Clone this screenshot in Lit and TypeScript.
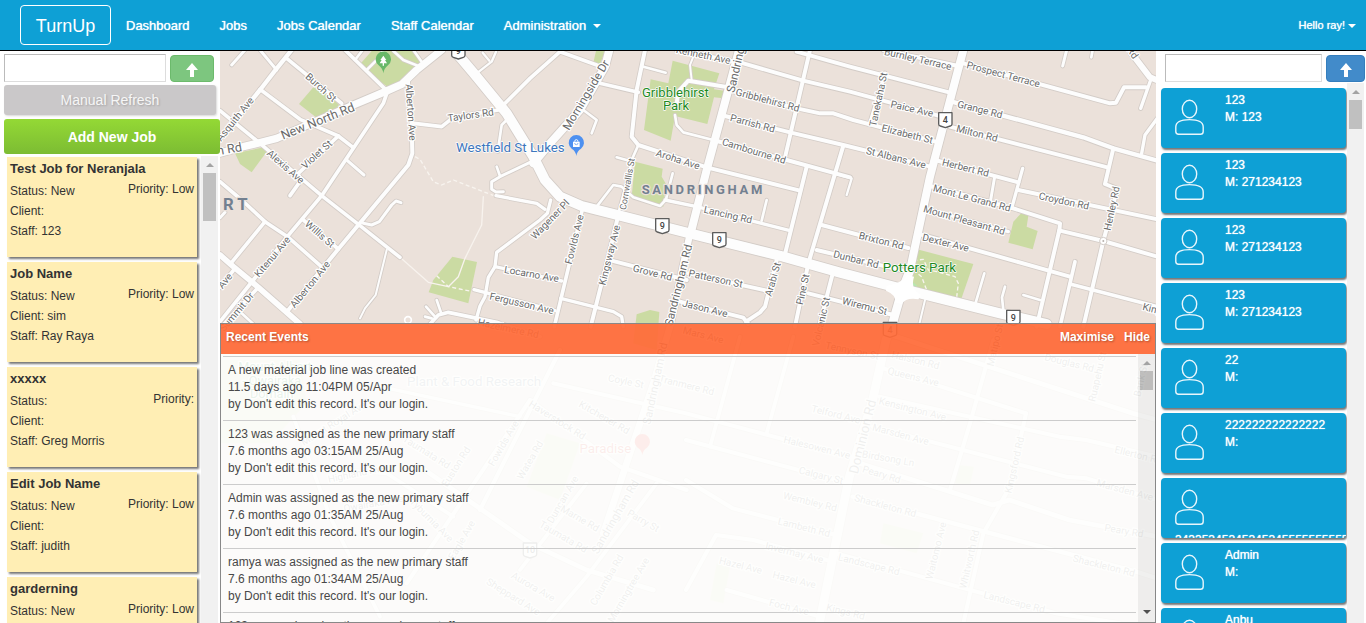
import { LitElement, html, svg, css } from "lit";
import { customElement } from "lit/decorators.js";

type Road = [number, string];
type Label = [string, number, number, number, number?, string?];

/* Map units are thirds of a pixel. */
const PARKS: string[] = [
  "418,45 455,3 590,3 600,45 560,95 505,112 495,105",
  "237,162 280,112 330,135 357,165 345,180 288,202",
  "45,310 140,290 140,305 95,367 60,342",
  "697,620 771,636 745,760 626,727 640,690",
  "1128,3 1155,3 1140,42 1120,38",
  "1358,32 1498,70 1482,118 1512,122 1510,145 1482,142 1462,222 1365,198 1352,272 1272,240 1292,88 1345,100",
  "1245,335 1328,356 1325,380 1338,402 1330,470 1235,440",
  "1250,793 1290,780 1318,786 1310,900 1240,880",
  "2405,488 2425,497 2420,530 2453,543 2438,598 2365,578 2380,515",
  "2080,595 2260,642 2222,752 2062,702",
];
const FAINT_PARKS: string[] = [
  "0,930 240,930 260,1060 150,1180 0,1180",
  "980,1150 1080,1180 1020,1350 920,1310",
  "2215,1245 2262,1250 2250,1305 2205,1300",
  "1990,1420 2110,1450 2090,1510 1980,1480",
  "1490,1540 1530,1550 1510,1660 1470,1650",
];

const ROADS: Road[] = [
  [9, "35,45 75,0"], [9, "120,0 170,60"], [13, "215,0 165,62 120,120 0,265"],
  [11, "200,25 365,160"], [11, "120,118 240,208 355,258 400,293"],
  [11, "0,182 120,280 305,437 420,527 540,622"],
  [11, "375,0 500,122"], [8, "405,30 428,0"], [8, "440,60 475,25 490,0"], [8, "520,3 550,30 595,48"], [8, "580,0 605,35"],
  [11, "502,125 490,160 400,295 305,437 200,562 100,690 0,815"],
  [11, "355,258 235,370 240,395 210,437"], [9, "380,330 432,375"],
  [12, "563,85 575,220 577,310 565,345 415,525 355,597 205,780"],
  [9, "430,520 455,525 478,515 515,465 528,453 543,458"],
  [11, "250,510 355,597"], [11, "0,395 65,450 135,515 205,562 310,655"],
  [11, "135,515 35,637"], [9, "0,503 15,487"],
  [17, "0,615 40,650 115,712 240,822"],
  [11, "45,655 0,712"], [11, "115,712 0,835"], [8, "65,790 100,822"],
  [6, "500,600 467,735 435,775 420,805"],
  [11, "583,220 665,230 700,202 835,180 850,165 930,85 1020,5 1130,45"],
  [7, "770,70 815,35 828,5"], [7, "788,8 808,32"],
  [8, "860,210 845,225 833,305"], [9, "930,337 840,380 815,395 815,418 828,426 850,425"], [8, "830,350 840,378"],
  [10, "828,437 950,460 975,478"], [10, "992,450 982,490 960,510 830,607 825,650 805,682 795,740 780,768 768,810"],
  [10, "825,650 1025,693"], [10, "762,719 1005,782"],
  [11, "630,822 655,795 685,787 830,817 960,860"], [8, "615,800 635,805"], [8, "618,770 645,800"], [8, "650,750 663,788"],
  [11, "1140,100 1255,127"], [8, "1270,50 1337,68"],
  [12, "1275,0 1250,120 1235,260 1255,285 1460,352 1740,422"],
  [8, "1255,285 1235,330 1225,380 1195,490"], [12, "1195,495 1170,600 1112,830"],
  [8, "1090,180 1130,210 1115,250"], [8, "1190,322 1230,333"],
  [8, "1130,470 1180,405 1205,410 1240,442 1320,468 1337,450"], [10, "1335,450 1430,470 1710,542"],
  [8, "1358,370 1337,452"], [8, "1640,450 1625,512"],
  [11, "1087,478 1003,830"], [10, "1022,745 1180,785 1205,800 1210,830"],
  [12, "1370,0 1570,40 1750,92 1890,125 2155,197"], [12, "1730,5 1890,50 2190,128"],
  [12, "1525,120 1730,175 1800,190 1840,190 1900,210 2155,277"],
  [12, "1370,160 1375,125 1405,92 1525,112"], [6, "1420,20 1410,45 1415,90"],
  [12, "1515,198 1710,247 1870,285 2140,352"],
  [8, "1365,195 1370,225 1390,247 1480,270"], [12, "1480,270 1700,330 1890,382"], [7, "1850,373 1895,385 1880,435"],
  [12, "1770,0 1695,322"], [12, "1760,350 1695,612"], [12, "1870,287 1765,640 1725,830"],
  [12, "1805,525 2065,594"], [12, "1790,600 2050,662"], [12, "1175,632 1400,690"],
  [12, "1405,670 1640,722"], [12, "1670,630 1635,770 1620,787 1578,815"], [12, "1380,755 1570,803 1585,822"],
  [12, "1765,730 2020,795"], [12, "1837,675 1797,830"],
  [12, "1990,0 2215,48"], [12, "2230,40 2670,160 2688,158 2712,112 2778,112"], [10, "2792,90 2762,175"],
  [10, "2812,205 2775,255 2765,310"], [9, "2540,0 2528,48"], [8, "2618,0 2614,22"],
  [11, "1995,70 1950,220"], [13, "2195,155 2590,262 2680,295 2812,332"], [12, "2190,230 2662,352"],
  [12, "2145,330 2395,397"], [12, "2395,420 2812,508"], [12, "2130,408 2370,472 2520,520 2518,545"],
  [12, "2520,542 2650,573 2812,620"], [10, "2115,475 2365,545"], [12, "2090,550 2550,680"], [11, "2550,702 2812,770"],
  [10, "2408,355 2375,475"], [9, "2324,380 2312,450"],
  [12, "2680,295 2655,402 2692,417 2650,573 2590,830"], [12, "2518,540 2450,830"], [11, "2565,635 2520,830"],
  [8, "2293,670 2265,765"], [8, "2355,710 2346,742 2352,800"], [8, "2410,735 2460,750"], [6, "2115,750 2098,822"],
  [18, "2735,10 2790,82 2815,92"],
  [22, "-10,312 70,290 120,278 170,265 400,165 500,123 545,103 590,60 665,0"],
  [24, "1168,0 1155,50 1080,180 990,280 940,340"],
  [24, "1557,0 1525,120 1460,360 1412,550"], [20, "1410,550 1350,830 1300,1000 1150,1450"],
  [24, "2230,0 2185,170 2130,380 2070,660"], [26, "2070,660 2045,725 2015,830 1998,870 1958,1050 1888,1280 1798,1720"],
  [30, "715,15 760,68 860,190 940,320 975,390 1020,440 1085,468 1200,497 1400,548 1690,620 1860,668 2040,715 2340,790 2480,822"],
];

const FAINT_ROADS: Road[] = [
  [14, "1998,850 2738,1090 2812,1110"], [12, "1990,955 2418,1090"], [12, "1978,1040 2518,1160 2598,1170 2812,1220"],
  [12, "1958,1130 2538,1280 2600,1285 2812,1350"], [12, "1000,1000 1398,1090 1908,1225"],
  [14, "1918,1240 2318,1365 2368,1350 2548,1410 2812,1460"], [12, "1398,1170 1868,1295"],
  [13, "1898,1340 2748,1565 2812,1585"], [12, "1848,1510 2508,1690 2700,1720"], [12, "1398,1290 1538,1375 1848,1455"],
  [12, "1398,1620 1488,1455 1600,1470 1820,1530"], [12, "1520,1620 1800,1700"], [11, "1560,860 1470,1190"],
  [11, "1720,860 1640,1150"], [12, "2320,870 2250,1120 2190,1320"], [12, "2418,1090 2370,1310 2290,1450 2230,1720"],
  [14, "600,1250 930,1480 1100,1560 1300,1620"], [12, "930,1050 560,1600"], [12, "1020,900 780,1380"],
  [12, "930,1050 1200,1250 1400,1320"], [11, "1100,1300 900,1560"], [11, "1310,1300 1100,1580 980,1720"],
  [11, "100,1240 500,1270 700,1400"], [11, "220,1100 330,1400 480,1700"], [10, "480,1010 900,1100"],
];

const FOOTPATHS: string[] = ["540,622 625,697 685,710 715,680 735,625 785,525 790,440"];
const DASHED: string[] = [
  "585,320 600,328 640,395 665,405 700,390 790,425 830,440", "650,677 685,710 755,724",
  "2080,632 2110,628 2125,660 2150,665 2205,680 2215,700 2210,742", "2080,660 2105,680 2120,720",
];

const DARK = "#6b6b6b";
const LABELS: Label[] = [
  ["Burch St", 303, 112, 42], ["Asquith Ave", 45, 207, -51], ["New North Rd", 293, 213, -22, 38],
  ["n Rd", 28, 296, -10, 38], ["Violet St", 290, 313, -42], ["Alexis Ave", 197, 350, 41], ["Willis St", 300, 552, 41],
  ["Kitenui Ave", 157, 620, -50], ["Alberton Ave", 270, 703, -51], ["Alberton Ave", 573, 187, 86],
  ["Summit Dr", 50, 785, -50], ["Ave", 15, 692, -50], ["Taylors Rd", 752, 195, -8], ["Wagener Pl", 990, 508, -46],
  ["Locarno Ave", 935, 672, 10], ["Fergusson Ave", 905, 760, 13], ["Hazelmere Rd", 865, 835, 12],
  ["Morningside Dr", 1098, 135, -59, 35], ["Kenneth Ave", 1450, 15, 12], ["Sandringham Rd", 1560, 2, -77, 35],
  ["Gribblehirst Rd", 1643, 150, 15], ["Parrish Rd", 1598, 220, 15], ["Cambourne Rd", 1602, 303, 17],
  ["Aroha Ave", 1374, 328, 18], ["Cornwallis St", 1222, 402, -80, 27], ["Lancing Rd", 1524, 494, 13],
  ["Fowlds Ave", 1063, 568, -76], ["Kingsway Ave", 1168, 615, -76], ["Grove Rd", 1298, 668, 14],
  ["Sandringham Rd", 1375, 705, -76, 34], ["Patterson St", 1487, 686, 12], ["Jason Ave", 1455, 775, 14],
  ["Arabi St", 1658, 688, -74], ["Pine St", 1748, 718, -78], ["Volcanic St", 1803, 815, -77],
  ["Burnley Terrace", 2094, 27, 13], ["Prospect Terrace", 2350, 73, 15], ["Tanekaha St", 1975, 148, -78],
  ["Paice Ave", 2076, 176, 13], ["Grange Rd", 2280, 178, 14], ["Elizabeth St", 2062, 252, 14], ["Milton Rd", 2271, 250, 14],
  ["St Albans Ave", 2028, 323, 14], ["Herbert Rd", 2237, 353, 14], ["Mont Le Grand Rd", 2256, 444, 15],
  ["Mount Pleasant Rd", 2233, 510, 16], ["Croydon Rd", 2532, 453, 12], ["Henley Rd", 2675, 475, -78],
  ["Brixton Rd", 1984, 572, 14], ["Dexter Ave", 2177, 578, 14], ["Dunbar Rd", 1908, 628, 14], ["Wiremu St", 1934, 768, 14],
  ["Kingsford Rd", 2852, 790, 14], ["Rd", 2738, 8, 55],
];

const FAINT_LABELS: Label[] = [
  ["Mars Ave", 1450, 855, 14], ["Tennyson St", 1897, 902, 12], ["Matipo St", 2325, 885, -77],
  ["Halston Rd", 2087, 930, 14], ["Douglas Rd", 2548, 938, 14], ["Ruapehu St", 2632, 980, -77], ["Bank St", 2762, 990, -77],
  ["Queens Ave", 2080, 980, 14], ["Kensington Ave", 2078, 1077, 14], ["Telford Ave", 1848, 1093, 14],
  ["Marsden Ave", 2042, 1153, 15], ["Dominion Rd", 1928, 1160, -76, 40], ["Halesowen Ave", 1791, 1192, 14],
  ["Ellerton Rd", 2755, 1215, 14], ["Birdsong Ln", 2005, 1225, 10], ["Calgary St", 1803, 1276, 14], ["Peary Rd", 1985, 1273, 17],
  ["Kingsford Rd", 2383, 1245, -77], ["Marsden Ave", 2715, 1320, 15], ["Wembley Rd", 1770, 1355, 14],
  ["Shackleton Rd", 1996, 1367, 15], ["Lambeth Rd", 1752, 1432, 14], ["Peary Rd", 2712, 1442, 10],
  ["Invermay Ave", 1723, 1508, 14], ["Waitomo Ave", 2148, 1502, -76], ["Whitworth Rd", 2248, 1528, -77],
  ["Landscape Rd", 1947, 1543, 14], ["Shackleton Rd", 2652, 1547, 14], ["Hazel Ave", 1562, 1546, 14], ["Hazel Ave", 1723, 1589, 14],
  ["Landscape Rd", 2383, 1656, 14], ["Foch Ave", 1707, 1671, 14], ["Kings Rd", 1877, 1685, 14],
  ["Coyle St", 1218, 994, 12], ["Tranmere Rd", 1400, 1005, 14], ["Sandringham Rd", 1305, 1000, -78, 34],
  ["Kitchener Rd", 1153, 1102, 30], ["Haverstock Rd", 1012, 1110, 32], ["Fowlds Ave", 850, 1180, -60],
  ["Taumata Rd", 620, 1206, 32], ["Watea Rd", 930, 1230, -60], ["Euston Rd", 708, 1250, -58],
  ["Mount Royal Ave", 340, 1120, -32], ["Highland Ave", 410, 1270, -12], ["Tyburnia Ave", 635, 1410, 45],
  ["Duncan Ave", 1028, 1348, -60], ["Marne Rd", 1080, 1405, 30], ["Sandringham Rd", 1185, 1400, -60, 34],
  ["Parry St", 1270, 1412, 30], ["Taumata Rd", 1030, 1460, 30], ["Eagle Ave", 725, 1470, -60], ["Aurora Ave", 940, 1610, 30],
  ["Columbia Rd", 1160, 1590, -60], ["Sheppard Ave", 880, 1640, 32], ["Morningtree Ave", 1225, 1620, -60],
  ["Owairaka Ave", 460, 1360, -10],
  ["Mount Albert", 165, 950, 0, 38, "#2b8a3e"], ["- Owairaka", 155, 990, 0, 38, "#2b8a3e"], ["Domain", 155, 1030, 0, 38, "#2b8a3e"],
  ["Plant & Food Research", 762, 994, 0, 40, "#7a8aa0"], ["Paradise", 1156, 1195, 0, 40, "#e2574c"],
];

const road = ([w, pts]: Road, casing: boolean) => svg`
  <polyline points=${pts} stroke-width=${casing ? w + 5 : w}></polyline>`;
const label = ([text, x, y, angle, size = 30, color = DARK]: Label) => svg`
  <text x=${x} y=${y} font-size=${size} fill=${color} transform="rotate(${angle} ${x} ${y})">${text}</text>`;
const shield = (x: number, y: number, n: string) => svg`
  <path d="M${x - 20} ${y - 21}h40v34q0 5-5 6l-15 5-15-5q-5-1-5-6z" fill="#fff" stroke="#5c5c5c" stroke-width="4" stroke-linejoin="round"></path>
  <text class="plain" x=${x} y=${y + 1} font-size="27" fill="#444">${n}</text>`;

@customElement("city-map")
class CityMap extends LitElement {
  static styles = css`
    :host { display: block; min-width: 0; min-height: 0; overflow: hidden; }
    .map { display: block; width: 100%; height: 100%; background: #ebe1da; }
    .lines { fill: none; stroke-linecap: round; stroke-linejoin: round; }
    .casing { stroke: #d3ccc7; }
    .fill { stroke: #fdfdfd; }
    .path { stroke: #f8f3ee; stroke-width: 4; }
    .dashed { stroke: #f8f4ef; stroke-width: 4; stroke-dasharray: 12 8; stroke-linecap: butt; }
    .labels { font-family: Roboto, "Liberation Sans", sans-serif; font-weight: 400; }
    text { text-anchor: middle; dominant-baseline: central; stroke: #fff; stroke-width: 7px; stroke-linejoin: round; paint-order: stroke; }
    .plain { stroke: none; font-weight: 500; }
    .district { letter-spacing: 8px; font-weight: 700; fill: #738090; stroke: #ebe1da; }
    .edge { letter-spacing: 12px; }
    .place { font-weight: 400; stroke-width: 4px; }
  `;
  render() {
    const roads = [...FAINT_ROADS, ...ROADS];
    return html`
      <svg class="map" viewBox="0 3 2808 1716" preserveAspectRatio="xMinYMin slice" role="img" aria-label="Street map">
        <g fill="#cbdba3">${PARKS.map((p) => svg`<polygon points=${p}></polygon>`)}</g>
        <g fill="#cbdba3" opacity="0.6">${FAINT_PARKS.map((p) => svg`<polygon points=${p}></polygon>`)}</g>
        <path d="M2062 702q12-14 30 6l-4 4z" fill="#b9e6b0"></path>
        <g class="lines path">${FOOTPATHS.map((p) => svg`<polyline points=${p}></polyline>`)}</g>
        <g class="lines dashed">${DASHED.map((p) => svg`<polyline points=${p}></polyline>`)}</g>
        <g class="lines casing">${roads.map((r) => road(r, true))}</g>
        <g class="lines fill">${roads.map((r) => road(r, false))}</g>
        <path d="M2000 708Q2045 700 2062 675L2082 680Q2070 720 2105 735L2095 748Q2058 742 2045 762L2025 757Q2030 735 1998 722Z" fill="#fff"></path>
        <circle cx="2650" cy="573" r="11" fill="#fff" stroke="#d2cbc6" stroke-width="3"></circle>
        <circle cx="2650" cy="573" r="3" fill="#b8b2ae"></circle>
        <circle cx="564" cy="810" r="10" fill="#ebe1da" stroke="#fff" stroke-width="5"></circle>
        <g class="labels">
          ${[...FAINT_LABELS, ...LABELS].map(label)}
          <text class="district" x="1450" y="418" font-size="39">SANDRINGHAM</text>
          <text class="district edge" x="52" y="463" font-size="50">RT</text>
          <text class="place" x="871" y="291" font-size="40" fill="#3c76bd">Westfield St Lukes</text>
          <text class="place" x="1366" y="126" font-size="39" fill="#1e8a1e">Gribblehirst</text>
          <text class="place" x="1368" y="165" font-size="39" fill="#1e8a1e">Park</text>
          <text class="place" x="2098" y="652" font-size="40" fill="#1e8a1e">Potters Park</text>
          ${shield(715, 3, "9")}${shield(1327, 527, "9")}${shield(1498, 569, "9")}
          ${shield(2176, 209, "4")}${shield(2380, 802, "9")}${shield(2010, 838, "4")}${shield(930, 1500, "10")}
        </g>
        <path d="M490 70Q488 55 476 46A23 23 0 1 1 504 46Q492 55 490 70Z" fill="#68b868"></path>
        <path d="M490 17l9 13h-4l6 10h-9v7h-4v-7h-9l6-10h-4z" fill="#fff"></path>
        <path d="M1069 318Q1067 303 1055 296A23 23 0 1 1 1083 296Q1071 303 1069 318Z" fill="#4d90f0"></path>
        <path d="M1059 275h20v16h-20z" fill="#fff"></path>
        <path d="M1064 275a5 6 0 0 1 10 0" fill="none" stroke="#fff" stroke-width="3"></path>
        <path d="M1064 279a5 5 0 0 0 10 0" fill="none" stroke="#4d90f0" stroke-width="2"></path>
        <path d="M1267 1215Q1265 1200 1253 1193A23 23 0 1 1 1281 1193Q1269 1200 1267 1215Z" fill="#f0564a"></path>
      </svg>`;
  }
}

@customElement("scroll-bar")
class ScrollBar extends LitElement {
  static styles = css`
    :host { display: flex; flex-direction: column; align-items: center; justify-content: space-between; width: 17px; box-sizing: border-box; padding: 7px 0 8px; background: rgba(0, 0, 0, 0.055); }
    .top { display: grid; justify-items: center; gap: 6px; width: 100%; }
    .up, .down { width: 0; height: 0; border: 4px solid transparent; border-top-width: 0; border-bottom: 4px solid #a3a3a3; }
    .down { display: var(--down, block); border-bottom-width: 0; border-top: 4px solid #505050; }
    .thumb { width: 13px; height: var(--thumb, 30px); background: rgba(0, 0, 0, 0.2); }
  `;
  render() {
    return html`<div class="top"><div class="up"></div><div class="thumb"></div></div><div class="down"></div>`;
  }
}

const arrow = html`
  <svg class="arrow" viewBox="0 0 12 14" aria-hidden="true"><path d="M6 0l6 7H8v7H4V7H0z" fill="#fff"></path></svg>`;

@customElement("app-root")
class AppRoot extends LitElement {
  jobs = [
    { name: "Test Job for Neranjala", status: "New", priority: "Low", client: "", staff: "123" },
    { name: "Job Name", status: "New", priority: "Low", client: "sim", staff: "Ray Raya" },
    { name: "xxxxx", status: "", priority: "", client: "", staff: "Greg Morris" },
    { name: "Edit Job Name", status: "New", priority: "Low", client: "", staff: "judith" },
    { name: "garderning", status: "New", priority: "Low", client: "", staff: "" },
  ];
  staff = [
    ["123", "123"], ["123", "271234123"], ["123", "271234123"], ["123", "271234123"], ["22", ""],
    ["222222222222222", ""], ["343353453453453455555555555", ""], ["Admin", ""], ["Anbu", ""],
  ];
  events = [
    ["A new material job line was created", "11.5 days ago 11:04PM 05/Apr"],
    ["123 was assigned as the new primary staff", "7.6 months ago 03:15AM 25/Aug"],
    ["Admin was assigned as the new primary staff", "7.6 months ago 01:35AM 25/Aug"],
    ["ramya was assigned as the new primary staff", "7.6 months ago 01:34AM 25/Aug"],
    ["123 was assigned as the new primary staff", "7.6 months ago 01:30AM 25/Aug"],
  ];

  static styles = css`
    :host { display: flex; flex-direction: column; height: 100vh; overflow: hidden; background: #fff; color: #333; font: 12px/17px "Liberation Sans", Arial, sans-serif; }
    * { box-sizing: border-box; }
    a { color: inherit; text-decoration: none; }
    button { font: inherit; cursor: pointer; }
    ul { list-style: none; margin: 0; padding: 0; }

    .bar { display: flex; align-items: center; flex: none; height: 51px; padding: 0 10px 0 20px; background: #0ea0d5; border-bottom: 1px solid #000; color: #fff; font-size: 13px; text-shadow: 0 0 1px #fff; }
    .brand { display: grid; place-items: center; width: 91px; height: 40px; padding-top: 2px; border: 1px solid #fff; border-radius: 4px; font-size: 18px; text-shadow: none; }
    .nav { display: flex; gap: 30px; flex: 1; padding-left: 15px; }
    .caret { display: inline-block; border: 4px solid transparent; border-top-color: #fff; border-bottom: 0; margin-left: 3px; vertical-align: middle; }
    .user { font-size: 11px; }

    .main { display: grid; grid-template-columns: 220px minmax(0, 1fr) 210px; flex: 1; min-height: 0; }
    .side { display: flex; flex-direction: column; min-height: 0; min-width: 0; }
    .search { display: flex; gap: 4px; padding: 3px 6px 0 4px; }
    .search input { flex: 1; min-width: 0; height: 28px; padding: 0 6px; border: 1px solid #bbb; border-right-color: #ddd; border-bottom-color: #ddd; border-radius: 0; background: #fff; font: inherit; outline: none; }
    .go { display: grid; place-items: center; width: 44px; height: 27px; margin-top: 1px; padding: 3px 0 0; border: 1px solid #6cba6c; border-radius: 4px; background: #7dc67f; }
    .arrow { width: 12px; height: 14px; }
    .refresh { height: 30px; margin: 3px 4px 0; border: 0; border-radius: 3px; background: #cac8c9; color: #f6f6f6; font-size: 14px; text-shadow: 1px 1px 2px rgba(0, 0, 0, 0.2); box-shadow: 1px 1px 2px rgba(0, 0, 0, 0.15); }
    .add { height: 35px; margin: 4px 0 0 4px; padding-top: 2px; border: 0; border-radius: 3px; background: linear-gradient(#94d935, #7cbc33); color: #fff; font-size: 14px; font-weight: 700; }

    .jobs { display: flex; flex: 1; min-height: 0; margin: 2px 2px 0 0; overflow: hidden; }
    .job-list { flex: 1; padding: 1px 4px 0 7px; overflow: hidden; }
    .job { height: 100px; margin-bottom: 5px; padding: 2px 3px; background: #ffeeb4; box-shadow: 2px 2px 2px #777; line-height: 20px; }
    .job h3 { margin: 0 0 2px; font-size: 13px; line-height: 20px; }
    .split { display: flex; justify-content: space-between; align-items: flex-start; }
    .priority { line-height: 16px; }

    .center { display: grid; grid-template: minmax(0, 1fr) / minmax(0, 1fr); min-height: 0; overflow: hidden; }
    .center > * { grid-area: 1 / 1; }
    .events { position: relative; align-self: end; display: flex; flex-direction: column; height: 300px; border: 1px solid #888; }
    .events-head { display: flex; gap: 10px; flex: none; height: 30px; padding: 5px; background: rgba(255, 106, 56, 0.93); color: #fff; font-weight: 700; text-shadow: 1px 1px 2px rgba(0, 0, 0, 0.3); }
    .events-head h2 { flex: 1; margin: 0; font-size: 12px; }
    .events-body { display: flex; flex: 1; min-height: 0; background: rgba(254, 254, 253, 0.9); overflow: hidden; }
    .event-list { flex: 1; padding: 2px 2px 0; overflow: hidden; }
    .event { height: 64px; padding: 5px; border-top: 1px solid #ccc; color: #484848; }

    .search.find { gap: 4px; padding: 3px 1px 0 9px; }
    .find .go { width: 39px; background: #428bca; border-color: #357ebd; }
    .crew { display: flex; flex: 1; min-height: 0; margin: 1px 2px 0 0; overflow: hidden; }
    .crew-list { flex: 1; padding: 5px 1px 0 5px; overflow: hidden; }
    .member { display: flex; flex-wrap: wrap; align-content: flex-start; column-gap: 21px; height: 60px; margin-bottom: 5px; padding-left: 14px; border-radius: 4px; background: #0ea0d5; box-shadow: 1px 2px 2px #777; color: #fff; text-shadow: 0 0 1px #fff; overflow: hidden; }
    .avatar { width: 29px; height: 54px; fill: none; stroke: #e8f6fc; stroke-width: 1.4; }
    .info { padding-top: 4px; }
    .info.wide { padding-top: 0; }
    .jobs scroll-bar { --thumb: 48px; --down: none; }
    .events scroll-bar { --thumb: 19px; }
    .crew scroll-bar { --thumb: 29px; --down: none; }
  `;

  render() {
    return html`
      <header class="bar">
        <a class="brand" href="#">TurnUp</a>
        <nav class="nav">
          <a href="#">Dashboard</a><a href="#">Jobs</a><a href="#">Jobs Calendar</a><a href="#">Staff Calendar</a>
          <a href="#">Administration <span class="caret"></span></a>
        </nav>
        <a class="user" href="#">Hello ray!<span class="caret"></span></a>
      </header>
      <main class="main">
        <section class="side">
          <div class="search">
            <input type="text" aria-label="Search jobs" />
            <button class="go" aria-label="Go to jobs">${arrow}</button>
          </div>
          <button class="refresh">Manual Refresh</button>
          <button class="add">Add New Job</button>
          <div class="jobs">
            <ul class="job-list">
              ${this.jobs.map((j) => html`
                <li class="job">
                  <h3>${j.name}</h3>
                  <div class="split"><span>Status: ${j.status}</span><span class="priority">Priority: ${j.priority}</span></div>
                  <div>Client: ${j.client}</div>
                  <div>Staff: ${j.staff}</div>
                </li>`)}
            </ul>
            <scroll-bar></scroll-bar>
          </div>
        </section>
        <section class="center">
          <city-map></city-map>
          <div class="events">
            <div class="events-head"><h2>Recent Events</h2><a href="#">Maximise</a><a href="#">Hide</a></div>
            <div class="events-body">
              <ul class="event-list">
                ${this.events.map(([what, when]) => html`
                  <li class="event"><div>${what}</div><div>${when}</div><div>by Don't edit this record. It's our login.</div></li>`)}
              </ul>
              <scroll-bar></scroll-bar>
            </div>
          </div>
        </section>
        <section class="side">
          <div class="search find">
            <input type="text" aria-label="Search staff" />
            <button class="go" aria-label="Go to staff">${arrow}</button>
          </div>
          <div class="crew">
            <ul class="crew-list">
              ${this.staff.map(([name, mobile]) => html`
                <li class="member">
                  <svg class="avatar" viewBox="0 0 29 54" aria-hidden="true">
                    <ellipse cx="14.5" cy="21" rx="7.2" ry="8.7"></ellipse>
                    <path d="M.8 43.5V39Q.8 31.6 14.5 31.6T28.200 39V43.500Q28.200 46.300 25.500 46.300H3.500Q.8 46.300.8 43.500Z"></path>
                  </svg>
                  <div class="info ${name.length > 20 ? "wide" : ""}"><div>${name}</div><div>M: ${mobile}</div></div>
                </li>`)}
            </ul>
            <scroll-bar></scroll-bar>
          </div>
        </section>
      </main>`;
  }
}
